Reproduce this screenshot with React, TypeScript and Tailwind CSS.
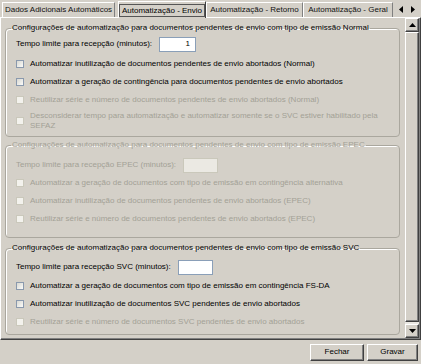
import React from "react";

type Row = { text: string | string[]; disabled?: boolean };

const raised =
  "border border-t-white border-l-white border-r-[#404040] border-b-[#404040] shadow-[inset_-1px_-1px_0_#808080]";

function CheckBox({ disabled }: { disabled?: boolean }) {
  return (
    <span
      className={
        disabled
          ? "w-[8px] h-[8px] shrink-0 border border-[#cac8bb] bg-[#f3f2ed]"
          : "w-[8px] h-[8px] shrink-0 border border-[#8a99ad] bg-linear-to-br from-[#d8d8d2] to-[#fbfbf9]"
      }
    />
  );
}

function CheckRow({ row }: { row: Row }) {
  const lines = Array.isArray(row.text) ? row.text : [row.text];
  return (
    <div
      className={`flex items-center gap-[6px] pl-[10px] ${
        lines.length > 1 ? "h-[22px] mt-[1px]" : "h-[18px]"
      } ${row.disabled ? "text-[#a3a196]" : "text-black"}`}
    >
      <CheckBox disabled={row.disabled} />
      <div className="leading-[10px] whitespace-nowrap">
        {lines.map((l, i) => (
          <div key={i}>{l}</div>
        ))}
      </div>
    </div>
  );
}

function TimeRow({
  label,
  value,
  width,
  disabled,
}: {
  label: string;
  value?: string;
  width: string;
  disabled?: boolean;
}) {
  return (
    <div
      className={`flex items-center gap-[7px] pl-[10px] h-[18px] ${
        disabled ? "text-[#a3a196]" : "text-black"
      }`}
    >
      <span className="whitespace-nowrap">{label}</span>
      <div
        className={`${width} h-[15px] border flex items-center justify-end pr-[5px] text-black ${
          disabled ? "border-[#cac8bb] bg-[#ebe9e3]" : "border-[#8a9fb8] bg-white"
        }`}
      >
        {value}
      </div>
    </div>
  );
}

function Group({
  title,
  disabled,
  className,
  children,
}: {
  title: string;
  disabled?: boolean;
  className: string;
  children: React.ReactNode;
}) {
  return (
    <fieldset
      className={`border border-[#aaa79e] rounded-[4px] shadow-[inset_1px_1px_0_#fff] ${className}`}
    >
      <legend
        className={`ml-[5px] px-[1px] leading-[10px] whitespace-nowrap ${
          disabled ? "text-[#a3a196]" : "text-black"
        }`}
      >
        {title}
      </legend>
      {children}
    </fieldset>
  );
}

function Tri({ dir }: { dir: "l" | "r" | "u" | "d" }) {
  const pts = {
    l: "4,0 4,7 0,3.5",
    r: "0,0 0,7 4,3.5",
    u: "0,4 7,4 3.5,0",
    d: "0,0 7,0 3.5,4",
  }[dir];
  const horiz = dir === "l" || dir === "r";
  return (
    <svg width={horiz ? 4 : 7} height={horiz ? 7 : 4}>
      <polygon points={pts} fill="#000" />
    </svg>
  );
}

export default function App() {
  const tabs = [
    { label: "Dados Adicionais Automáticos", w: "w-[113px]", ml: "ml-[2px]" },
    { label: "Automatização - Envio", w: "w-[88px]", ml: "ml-[3px]", active: true },
    { label: "Automatização - Retorno", w: "w-[97px]", ml: "ml-0" },
    { label: "Automatização - Geral", w: "w-[90px]", ml: "ml-0" },
  ];

  return (
    <div className="w-[421px] h-[364px] bg-[#d4d0c8] text-[8px] font-['Liberation_Sans',Arial,sans-serif] text-black flex flex-col overflow-hidden select-none">
      {/* Tabs */}
      <div className="h-[17px] flex items-end shrink-0">
        {tabs.map((t, i) =>
          t.active ? (
            <div
              key={i}
              className={`${t.w} ${t.ml} h-[17px] -mb-[1px] relative z-10 bg-[#d4d0c8] border-l border-t border-white border-r border-r-[#404040] flex items-center justify-center whitespace-nowrap`}
            >
              <span className="border border-[#555] px-[2px] leading-[11px] whitespace-nowrap">{t.label}</span>
            </div>
          ) : (
            <div
              key={i}
              className={`${t.w} ${t.ml} h-[15px] border-l border-t border-white border-r border-r-[#808080] flex items-center justify-center whitespace-nowrap text-[#111]`}
            >
              {t.label}
            </div>
          )
        )}
        <div className="flex-1 h-[15px] flex items-center justify-end gap-[8px] pr-[6px]">
          <Tri dir="l" />
          <Tri dir="r" />
        </div>
      </div>

      {/* Tab page */}
      <div className="h-[323px] shrink-0 border-t border-l border-white border-r border-b border-r-[#404040] border-b-[#404040]">
        <div className="h-full flex border-r border-b border-r-[#808080] border-b-[#808080]">
          <div className="flex-1 overflow-hidden pl-[4px] pr-[5px] pt-[5px]">
            <Group title="Configurações de automatização para documentos pendentes de envio com tipo de emissão Normal" className="pb-[4px]">
              <div className="mt-[2px]">
                <TimeRow label="Tempo limite para recepção (minutos):" value="1" width="w-[37px]" />
              </div>
              <div className="mt-[2px]">
                <CheckRow row={{ text: "Automatizar inutilização de documentos pendentes de envio abortados (Normal)" }} />
                <CheckRow row={{ text: "Automatizar a geração de contingência para documentos pendentes de envio abortados" }} />
                <CheckRow row={{ text: "Reutilizar série e número de documentos pendentes de envio abortados (Normal)", disabled: true }} />
                <CheckRow
                  row={{
                    text: [
                      "Desconsiderar tempo para automatização e automatizar somente se o SVC estiver habilitado pela",
                      "SEFAZ",
                    ],
                    disabled: true,
                  }}
                />
              </div>
            </Group>

            <Group title="Configurações de automatização para documentos pendentes de envio com tipo de emissão EPEC" disabled className="mt-[3px] pb-[9px]">
              <div className="mt-[6px]">
                <TimeRow label="Tempo limite para recepção EPEC (minutos):" width="w-[35px]" disabled />
              </div>
              <CheckRow row={{ text: "Automatizar a geração de documentos com tipo de emissão em contingência alternativa", disabled: true }} />
              <CheckRow row={{ text: "Automatizar inutilização de documentos pendentes de envio abortados (EPEC)", disabled: true }} />
              <CheckRow row={{ text: "Reutilizar série e número de documentos pendentes de envio abortados (EPEC)", disabled: true }} />
            </Group>

            <Group title="Configurações de automatização para documentos pendentes de envio com tipo de emissão SVC" className="mt-[5px] pb-[3px]">
              <div className="mt-[5px]">
                <TimeRow label="Tempo limite para recepção SVC (minutos):" width="w-[35px]" />
              </div>
              <div className="mt-[1px]">
                <CheckRow row={{ text: "Automatizar a geração de documentos com tipo de emissão em contingência FS-DA" }} />
                <CheckRow row={{ text: "Automatizar inutilização de documentos SVC pendentes de envio abortados" }} />
                <CheckRow row={{ text: "Reutilizar série e número de documentos SVC pendentes de envio abortados", disabled: true }} />
              </div>
            </Group>
          </div>

          {/* Scrollbar */}
          <div className="w-[14px] flex flex-col bg-[#ebe9e4]">
            <div className={`h-[14px] ${raised} bg-[#d4d0c8] flex items-center justify-center`}>
              <Tri dir="u" />
            </div>
            <div className="flex-1 flex flex-col pb-[2px]">
              <div className={`flex-1 ${raised} bg-[#d4d0c8]`} />
            </div>
            <div className={`h-[14px] ${raised} bg-[#d4d0c8] flex items-center justify-center`}>
              <Tri dir="d" />
            </div>
          </div>
        </div>
      </div>

      {/* Buttons */}
      <div className="flex-1 flex items-center justify-end gap-[3px] pr-[3px]">
        <button className={`w-[54px] h-[17px] ${raised} bg-[#d4d0c8] text-black`}>Fechar</button>
        <button className={`w-[51px] h-[17px] ${raised} bg-[#d4d0c8] text-black`}>Gravar</button>
      </div>
    </div>
  );
}
